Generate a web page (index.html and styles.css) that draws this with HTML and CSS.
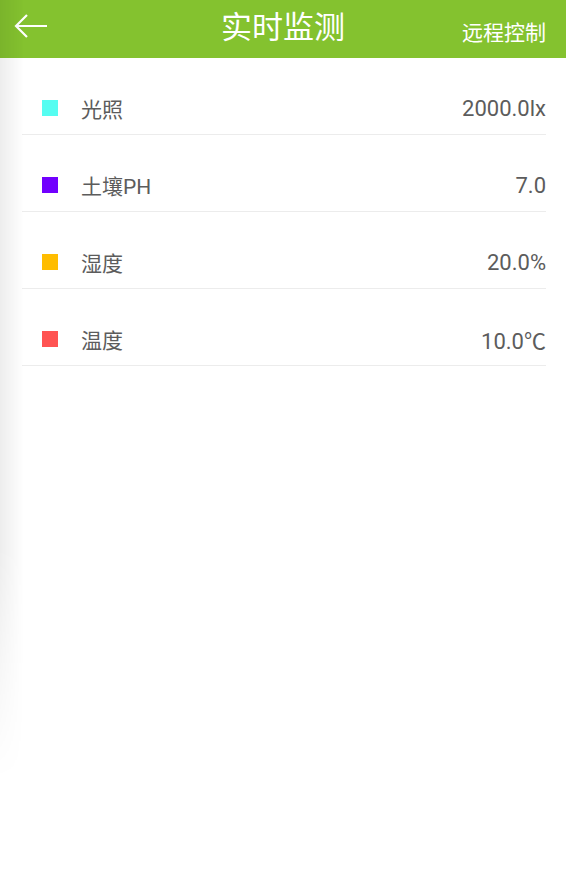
FILE: index.html
```html
<!DOCTYPE html>
<html lang="zh-CN">

<head>
    <meta charset="UTF-8">
    <meta name="viewport" content="width=device-width, initial-scale=1.0">
    <title>实时监测</title>
    <link rel="stylesheet" href="styles.css">
</head>

<body>
    <div class="page">
        <div class="topbar">
            <a class="back" href="#">
                <svg width="34" height="24" viewBox="0 0 34 24">
                    <path d="M2 12 H33 M13 1 L2 12 L13 23" fill="none" stroke="#fff" stroke-width="2.2" />
                </svg>
            </a>
            <h1 class="title">实时监测</h1>
            <a class="remote" href="#">远程控制</a>
        </div>

        <ul class="sensors">
            <li class="sensor">
                <span class="dot light"></span>
                <span class="name">光照</span>
                <span class="value">2000.0lx</span>
            </li>
            <li class="sensor">
                <span class="dot ph"></span>
                <span class="name">土壤PH</span>
                <span class="value">7.0</span>
            </li>
            <li class="sensor">
                <span class="dot humidity"></span>
                <span class="name">湿度</span>
                <span class="value">20.0%</span>
            </li>
            <li class="sensor">
                <span class="dot temp"></span>
                <span class="name">温度</span>
                <span class="value">10.0℃</span>
            </li>
        </ul>

        <div class="edge-shadow"></div>
    </div>
</body>

</html>
```

FILE: styles.css
```css
* {
    box-sizing: border-box;
}

body {
    margin: 0;
    background: #fff;
    font-family: Roboto, "Noto Sans CJK SC", sans-serif;
}

.page {
    position: relative;
    width: 566px;
    height: 894px;
    overflow: hidden;
}

.topbar {
    height: 58px;
    background: #84c22f;
    display: flex;
    align-items: center;
    justify-content: space-between;
    padding: 0 20px 0 14px;
    position: relative;
}

.back {
    display: flex;
    margin-top: -6px;
}

.title {
    position: absolute;
    left: 0;
    right: 0;
    top: 0;
    margin: 0;
    text-align: center;
    line-height: 56px;
    font-size: 31px;
    font-weight: normal;
    color: #fff;
    pointer-events: none;
}

.remote {
    color: #fff;
    text-decoration: none;
    font-size: 21px;
    margin-top: 4px;
}

.sensors {
    list-style: none;
    margin: 0 20px 0 22px;
    padding: 0;
}

.sensor {
    display: flex;
    align-items: center;
    height: 77px;
    padding: 40px 0 16px 20px;
    border-bottom: 1px solid #ececec;
    color: #5c5c5c;
    font-size: 21px;
}

.dot {
    width: 16px;
    height: 16px;
    margin-right: 23px;
}

.light {
    background: #55fdf1;
}

.ph {
    background: #7100fe;
}

.humidity {
    background: #ffbd00;
}

.temp {
    background: #ff5352;
}

.value {
    margin-left: auto;
    font-size: 22px;
}

.edge-shadow {
    position: absolute;
    left: 0;
    top: 0;
    width: 24px;
    height: 780px;
    background: linear-gradient(to right, rgba(0, 0, 0, 0.07), rgba(0, 0, 0, 0));
    -webkit-mask-image: linear-gradient(to bottom, #000 70%, transparent);
    mask-image: linear-gradient(to bottom, #000 70%, transparent);
    pointer-events: none;
}
```
